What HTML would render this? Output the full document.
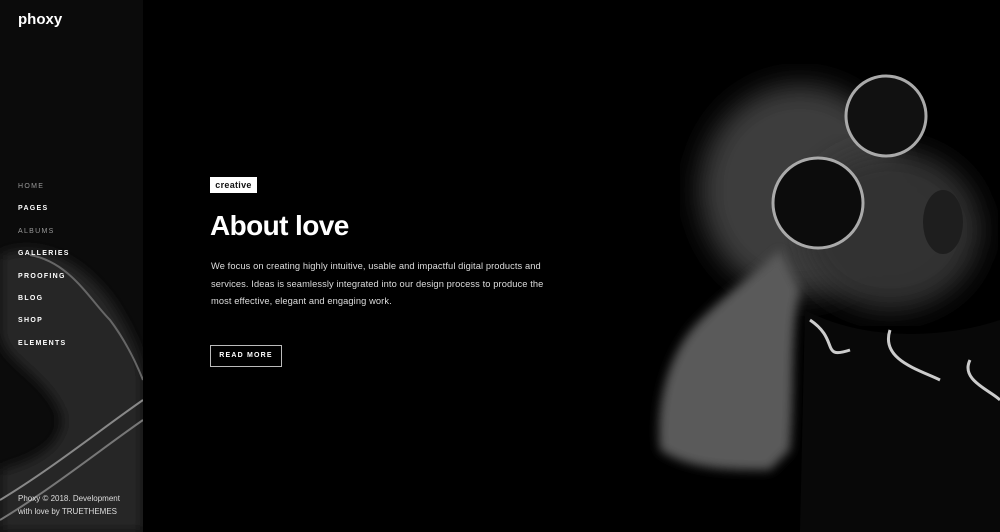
<!DOCTYPE html>
<html><head><meta charset="utf-8"><style>
*{margin:0;padding:0;box-sizing:border-box}
body{width:1000px;height:532px;background:#000;overflow:hidden;position:relative;font-family:"Liberation Sans",sans-serif;color:#fff}
.side{position:absolute;left:0;top:0;width:143px;height:532px;background:#0b0b0b;overflow:hidden}
.logo{position:absolute;left:18px;top:11px;font-size:15px;font-weight:bold}
.nav{position:absolute;left:18px;top:183px;list-style:none}
.nav li{font-size:7px;font-weight:bold;letter-spacing:1.3px;height:22.4px}
.nav li.d{color:#999;font-weight:normal}
.foot{position:absolute;left:18px;top:493px;font-size:8px;line-height:12.5px;color:#ddd}
.tag{position:absolute;left:210px;top:177px;width:47px;height:16px;background:#fff;color:#111;font-size:9px;font-weight:bold;text-align:center;line-height:16px;letter-spacing:.3px}
h1{position:absolute;left:210px;top:210px;font-size:28px;font-weight:bold;letter-spacing:-.6px}
p{position:absolute;left:211px;top:258px;width:350px;font-size:9.3px;line-height:17.6px;color:#ddd;letter-spacing:.1px}
.btn{position:absolute;left:210px;top:345px;width:72px;height:22px;border:1px solid #bbb;font-size:7px;font-weight:bold;letter-spacing:1.2px;text-align:center;line-height:20px}
</style></head><body>
<div class="side">
<svg width="143" height="532" style="position:absolute;left:0;top:0">
<defs><filter id="b"><feGaussianBlur stdDeviation="6"/></filter></defs>
<path d="M0 255 C40 240 80 260 110 300 C130 330 143 360 143 380 L143 532 L0 532 L0 470 C40 460 70 440 60 410 C40 370 0 360 0 330Z" fill="#262626" filter="url(#b)"/>
<path d="M30 255 C70 262 90 300 110 320 C125 340 135 360 143 380" stroke="#666" stroke-width="2" fill="none"/>
<path d="M0 500 C50 470 100 430 143 400" stroke="#888" stroke-width="2" fill="none"/>
<path d="M0 520 C50 490 100 450 143 420" stroke="#777" stroke-width="2" fill="none"/>
</svg>
<div class="logo">phoxy</div>
<ul class="nav"><li class="d">HOME</li><li>PAGES</li><li class="d">ALBUMS</li><li>GALLERIES</li><li>PROOFING</li><li>BLOG</li><li>SHOP</li><li>ELEMENTS</li></ul>
<div class="foot">Phoxy © 2018. Development<br>with love by TRUETHEMES</div>
</div>
<svg width="360" height="532" style="position:absolute;left:640px;top:0">
<defs><filter id="c"><feGaussianBlur stdDeviation="14"/></filter><filter id="d"><feGaussianBlur stdDeviation="5"/></filter></defs>
<ellipse cx="160" cy="190" rx="100" ry="105" fill="#3c3c3c" filter="url(#c)"/>
<ellipse cx="250" cy="230" rx="90" ry="80" fill="#333" filter="url(#c)"/>
<path d="M20 450 C15 400 30 350 60 320 C90 290 120 270 140 250 L160 290 C150 330 155 390 150 450 L130 470 C90 470 50 470 20 450Z" fill="#5a5a5a" filter="url(#d)"/>
<path d="M165 310 C220 340 300 340 360 320 L360 532 L160 532Z" fill="#080808"/>
<path d="M170 320 C200 340 180 360 210 350 M250 330 C240 360 280 370 300 380 M330 360 C320 380 350 390 360 400" stroke="#ccc" stroke-width="3" fill="none"/>
<circle cx="246" cy="116" r="40" fill="#111" stroke="#aaa" stroke-width="3"/>
<circle cx="178" cy="203" r="45" fill="#0c0c0c" stroke="#aaa" stroke-width="3"/>
<ellipse cx="303" cy="222" rx="20" ry="32" fill="#1e1e1e"/>
</svg>
<div class="tag">creative</div>
<h1>About love</h1>
<p>We focus on creating highly intuitive, usable and impactful digital products and services. Ideas is seamlessly integrated into our design process to produce the most effective, elegant and engaging work.</p>
<div class="btn">READ MORE</div>
</body></html>
